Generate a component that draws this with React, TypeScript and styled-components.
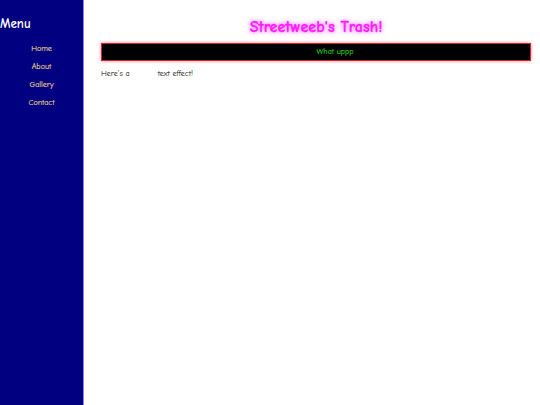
import React from "react";
import styled, { createGlobalStyle } from "styled-components";

const Global = createGlobalStyle`
  html, body { margin: 0; padding: 0; height: 100%; background: #ffffff; }
  body { font-family: "Comic Sans MS", "Comic Neue", "Open Sans", sans-serif; }
  #root { height: 100%; }
`;

const Page = styled.div`
  display: flex;
  height: 405px;
  width: 540px;
  overflow: hidden;
`;

const Sidebar = styled.nav`
  width: 83px;
  flex: none;
  background: #000080;
  border-right: 1px solid #8a8ad8;
  display: flex;
  flex-direction: column;
`;

const MenuTitle = styled.h2`
  margin: 17px 0 12px 0;
  color: #ffffff;
  font-size: 13px;
  font-weight: 700;
  line-height: 14px;
`;

const NavList = styled.ul`
  list-style: none;
  margin: 0;
  padding: 0;
  display: flex;
  flex-direction: column;
  gap: 6px;
`;

const NavLink = styled.a`
  display: block;
  text-align: center;
  color: #e6d08a;
  font-size: 8px;
  line-height: 12px;
  text-decoration: none;
  -webkit-text-stroke: 0.15px #e6d08a;
`;

const Main = styled.main`
  flex: 1;
  padding: 0 9px 0 17px;
  display: flex;
  flex-direction: column;
`;

const Title = styled.h1`
  margin: 17px 0 0 0;
  text-align: center;
  color: #ff1aff;
  font-size: 16px;
  line-height: 20px;
  font-weight: 700;
  -webkit-text-stroke: 0.3px #ff1aff;
  text-shadow: 0 0 4px #ff80ff, 0 0 6px #ff9cff;
`;

const Banner = styled.div`
  margin-top: 6px;
  height: 16px;
  background: #000000;
  border: 1px solid #e0202a;
  box-shadow: 0 0 3px #ff7a88;
  display: flex;
  align-items: center;
  justify-content: center;
`;

const BannerText = styled.span`
  margin-left: 38px;
  color: #1ed41e;
  font-size: 8px;
  line-height: 10px;
  -webkit-text-stroke: 0.15px #1ed41e;
`;

const Para = styled.p`
  margin: 7px 0 0 0;
  color: #111111;
  font-size: 8px;
  line-height: 12px;
`;

const Hidden = styled.span`
  color: #ffffff;
`;

export default function App() {
  return (
    <>
      <Global />
      <Page>
        <Sidebar>
          <MenuTitle>Menu</MenuTitle>
          <NavList>
            <li><NavLink href="#">Home</NavLink></li>
            <li><NavLink href="#">About</NavLink></li>
            <li><NavLink href="#">Gallery</NavLink></li>
            <li><NavLink href="#">Contact</NavLink></li>
          </NavList>
        </Sidebar>
        <Main>
          <Title>Streetweeb's Trash!</Title>
          <Banner>
            <BannerText>What uppp</BannerText>
          </Banner>
          <Para>
            Here's a <Hidden>wobbly</Hidden> text effect!
          </Para>
        </Main>
      </Page>
    </>
  );
}
